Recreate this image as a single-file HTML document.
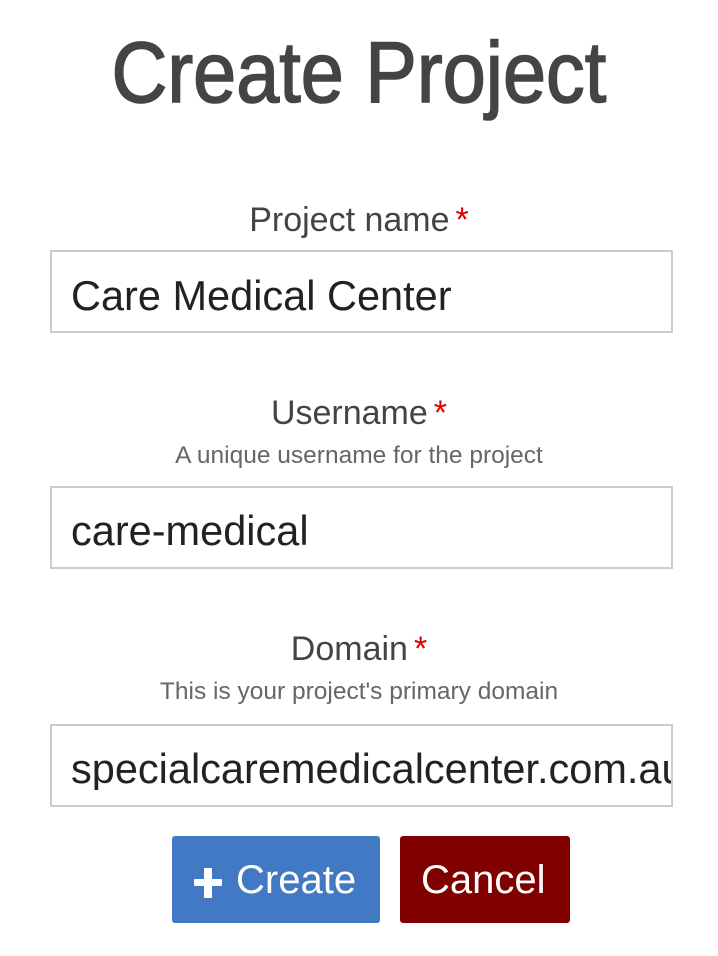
<!DOCTYPE html>
<html><head><meta charset="utf-8"><style>
body{margin:0;width:718px;height:956px;background:#fff;position:relative;overflow:hidden;font-family:"Liberation Sans",sans-serif}
.a{position:absolute;line-height:1;white-space:nowrap}
.c{left:0;width:718px;text-align:center}
.lab{font-size:34px;color:#444}
.lab b{color:#d00;font-weight:normal;margin-left:6px}
.hint{font-size:24.5px;color:#666}
.box{position:absolute;left:50px;width:619px;height:79px;border:2px solid #ccc;overflow:hidden}
.val{font-size:41.5px;color:#222;left:71px}
.btn{position:absolute;top:836px;height:87px;border-radius:3px}
</style></head><body>
<div class="a c" style="top:30px"><span style="display:inline-block;font-size:86px;color:#444;-webkit-text-stroke:1.6px #444;transform:scaleX(0.9)">Create Project</span></div>

<div class="a c lab" style="top:203px">Project name<b>*</b></div>
<div class="box" style="top:250px"></div>
<div class="a val" style="top:275px">Care Medical Center</div>

<div class="a c lab" style="top:396px">Username<b>*</b></div>
<div class="a c hint" style="top:444px">A unique username for the project</div>
<div class="box" style="top:486px"></div>
<div class="a val" style="top:510px">care-medical</div>

<div class="a c lab" style="top:632px">Domain<b>*</b></div>
<div class="a c hint" style="top:680px">This is your project's primary domain</div>
<div class="box" style="top:724px"></div>
<div class="a val" style="top:748px;width:600px;overflow:hidden">specialcaremedicalcenter.com.au</div>

<div class="btn" style="left:172px;width:208px;background:#4279c4"></div>
<div class="a" style="left:194px;top:879px;width:28px;height:7px;background:#fff;border-radius:1px"></div>
<div class="a" style="left:204px;top:868px;width:8px;height:30px;background:#fff;border-radius:1px"></div>
<div class="a" style="left:236px;top:860px;font-size:40px;color:#fff">Create</div>
<div class="btn" style="left:400px;width:170px;background:#800000"></div>
<div class="a" style="left:421px;top:860px;font-size:40px;color:#fff">Cancel</div>
</body></html>
